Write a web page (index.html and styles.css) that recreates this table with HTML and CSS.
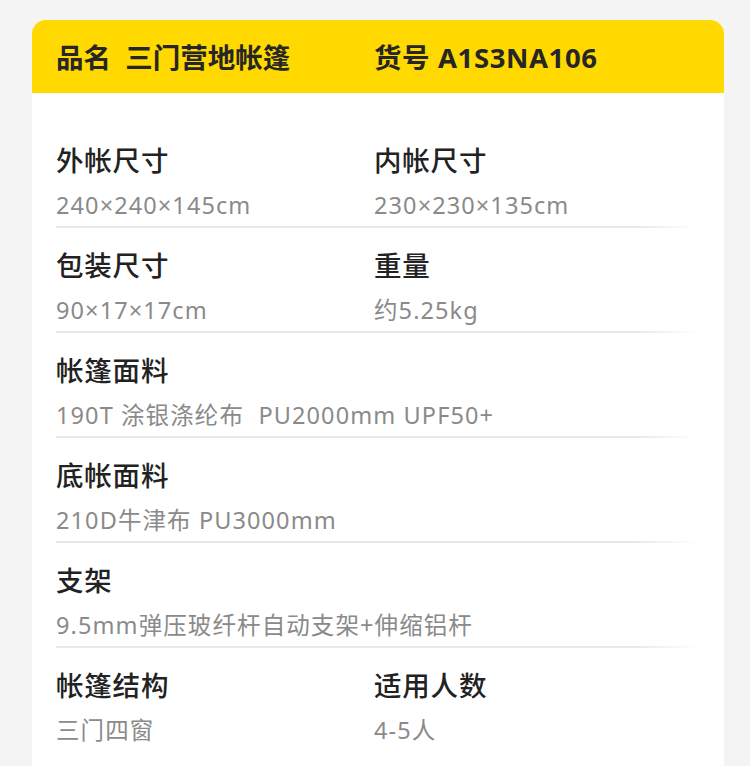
FILE: index.html
```html
<!DOCTYPE html>
<html lang="zh">
<head>
<meta charset="utf-8">
<link rel="stylesheet" href="styles.css">
</head>
<body>
<div class="card">
  <div class="head">
    <div class="head-col">品名&nbsp;&nbsp;三门营地帐篷</div>
    <div class="head-col code">货号 A1S3NA106</div>
  </div>
  <div class="body">
    <div class="row">
      <div class="cell"><div class="label">外帐尺寸</div><div class="value">240×240×145cm</div></div>
      <div class="cell"><div class="label">内帐尺寸</div><div class="value">230×230×135cm</div></div>
    </div>
    <div class="row">
      <div class="cell"><div class="label">包装尺寸</div><div class="value">90×17×17cm</div></div>
      <div class="cell"><div class="label">重量</div><div class="value">约5.25kg</div></div>
    </div>
    <div class="row">
      <div class="cell wide"><div class="label">帐篷面料</div><div class="value">190T 涂银涤纶布&nbsp;&nbsp;PU2000mm UPF50+</div></div>
    </div>
    <div class="row">
      <div class="cell wide"><div class="label">底帐面料</div><div class="value">210D牛津布 PU3000mm</div></div>
    </div>
    <div class="row">
      <div class="cell wide"><div class="label">支架</div><div class="value">9.5mm弹压玻纤杆自动支架+伸缩铝杆</div></div>
    </div>
    <div class="row last">
      <div class="cell"><div class="label">帐篷结构</div><div class="value">三门四窗</div></div>
      <div class="cell"><div class="label">适用人数</div><div class="value">4-5人</div></div>
    </div>
  </div>
</div>
</body>
</html>
```

FILE: styles.css
```css
html, body {
  margin: 0;
  padding: 0;
}
body {
  background: #f4f4f4;
  font-family: "Noto Sans", "Noto Sans CJK SC", sans-serif;
  padding: 20px 26px 0 32px;
  height: 766px;
  box-sizing: border-box;
  overflow: hidden;
}
.card {
  background: #ffffff;
  border-radius: 14px 14px 0 0;
  overflow: hidden;
  height: 760px;
}
.head {
  background: #ffd900;
  height: 73px;
  display: grid;
  grid-template-columns: 318px 1fr;
  align-items: center;
  padding: 0 24px;
  color: #262626;
  font-size: 27.5px;
  font-weight: 700;
}
.head-col {
  line-height: 36px;
  padding-top: 2px;
}
.code {
  letter-spacing: 0.6px;
}
.body {
  padding: 30px 26px 0 24px;
}
.row {
  display: grid;
  grid-template-columns: 318px 1fr;
  height: 105px;
  box-sizing: border-box;
  padding-top: 20px;
  position: relative;
}
.row::after {
  content: "";
  position: absolute;
  left: 0;
  right: 0;
  bottom: 0;
  height: 2px;
  background: linear-gradient(to right, #e8e8e8 0%, #e8e8e8 90%, rgba(232,232,232,0) 100%);
}
.row.last::after {
  display: none;
}
.wide {
  grid-column: 1 / 3;
}
.label {
  font-size: 27.5px;
  line-height: 36px;
  font-weight: 500;
  letter-spacing: 0.8px;
  color: #222222;
}
.value {
  margin-top: 10px;
  font-size: 23.5px;
  line-height: 32px;
  letter-spacing: 1.1px;
  color: #8a8a8a;
}
```
